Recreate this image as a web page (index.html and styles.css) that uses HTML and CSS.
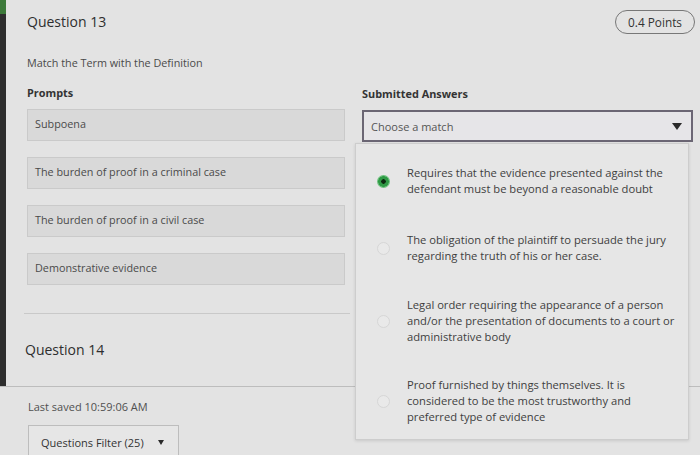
FILE: index.html
```html
<!DOCTYPE html>
<html>
<head>
<meta charset="utf-8">
<link rel="stylesheet" href="styles.css">
</head>
<body>
<div class="page">
  <div class="strip"><div class="strip-top"></div></div>
  <div class="main">
    <div class="q-header">
      <h2 class="q-title">Question 13</h2>
      <span class="points">0.4 Points</span>
    </div>
    <p class="instr">Match the Term with the Definition</p>
    <div class="cols">
      <div class="col-left">
        <div class="col-label">Prompts</div>
        <div class="prompt">Subpoena</div>
        <div class="prompt">The burden of proof in a criminal case</div>
        <div class="prompt">The burden of proof in a civil case</div>
        <div class="prompt">Demonstrative evidence</div>
      </div>
      <div class="col-right">
        <div class="col-label">Submitted Answers</div>
        <div class="select">
          <span>Choose a match</span>
          <span class="caret"></span>
        </div>
        <div class="menu">
          <div class="opt"><span class="radio on"></span><span class="opt-text">Requires that the evidence presented against the defendant must be beyond a reasonable doubt</span></div>
          <div class="opt"><span class="radio"></span><span class="opt-text">The obligation of the plaintiff to persuade the jury regarding the truth of his or her case.</span></div>
          <div class="opt"><span class="radio"></span><span class="opt-text">Legal order requiring the appearance of a person and/or the presentation of documents to a court or administrative body</span></div>
          <div class="opt"><span class="radio"></span><span class="opt-text">Proof furnished by things themselves. It is considered to be the most trustworthy and preferred type of evidence</span></div>
        </div>
      </div>
    </div>
    <div class="q14">
      <h2 class="q-title">Question 14</h2>
    </div>
  </div>
</div>
<div class="footer">
  <div class="saved">Last saved 10:59:06 AM</div>
  <div class="filter"><span>Questions Filter (25)</span><span class="caret small"></span></div>
</div>
</body>
</html>
```
FILE: styles.css
```css
* { box-sizing: border-box; }
html, body { margin: 0; padding: 0; }
body {
  width: 700px;
  height: 455px;
  overflow: hidden;
  background: #e3e3e3;
  font-family: "Open Sans", "Noto Sans", sans-serif;
  color: #3c3c3c;
  position: relative;
}
.page {
  display: flex;
  height: 386px;
}
.strip {
  width: 6px;
  background: #2e2e2e;
  flex: none;
}
.strip-top {
  height: 14px;
  background: #3d7a3a;
}
.main {
  flex: 1;
  padding: 8px 5px 0 21px;
  position: relative;
}
.q-header {
  display: flex;
  justify-content: space-between;
  align-items: center;
  height: 27px;
}
.q-title {
  margin: 0;
  font-size: 14px;
  font-weight: 400;
  color: #2e2e2e;
}
.points {
  border: 1px solid #777;
  border-radius: 13px;
  padding: 3px 12px;
  font-size: 11.8px;
  color: #333;
  margin-right: 0;
}
.instr {
  margin: 20px 0 0 0;
  font-size: 10.8px;
  color: #4a4a4a;
}
.cols {
  display: grid;
  grid-template-columns: 318px 331px;
  column-gap: 17px;
  margin-top: 16px;
}
.col-label {
  font-size: 10.9px;
  font-weight: 700;
  color: #333;
  height: 16px;
  margin-bottom: 8px;
}
.col-left .col-label { margin-top: -1px; margin-bottom: 8px; }
.prompt {
  height: 32px;
  background: #d9d9d9;
  border: 1px solid #cacaca;
  font-size: 10.8px;
  color: #4a4a4a;
  padding: 6px 7px;
  margin-bottom: 16px;
}
.select {
  height: 32px;
  border: 2px solid #6b6674;
  background: #e6e5e8;
  display: flex;
  align-items: center;
  justify-content: space-between;
  padding: 0 9px 0 7px;
  font-size: 11px;
  color: #555;
}
.caret {
  width: 0;
  height: 0;
  border-left: 5px solid transparent;
  border-right: 5px solid transparent;
  border-top: 7px solid #2a2a2a;
}
.caret.small {
  border-left-width: 3px;
  border-right-width: 3px;
  border-top-width: 5px;
}
.menu {
  position: absolute;
  left: 349px;
  top: 143px;
  width: 334px;
  height: 297px;
  background: #e6e6e6;
  border: 1px solid #cdcdcd;
  box-shadow: 0 1px 3px rgba(0,0,0,0.12);
  padding: 21px 8px 0 21px;
  z-index: 2;
}
.opt {
  display: flex;
  align-items: center;
  gap: 17px;
  font-size: 11.2px;
  line-height: 16px;
  color: #3e3e3e;
}
.opt:nth-child(1) { height: 32px; }
.opt:nth-child(2) { height: 32px; margin-top: 35px; }
.opt:nth-child(3) { height: 48px; margin-top: 33px; }
.opt:nth-child(4) { height: 48px; margin-top: 32px; }
.radio {
  flex: none;
  width: 13px;
  height: 13px;
  border-radius: 50%;
  border: 1px solid #d6d6d6;
  background: #e9e9e9;
}
.radio.on {
  background: radial-gradient(circle, #0c2a10 0 2px, #2f9a45 2.5px 5px, #6cc07c 5.5px);
  border: none;
}
.q14 {
  margin-top: 12px;
  border-top: 1px solid #c9c9c9;
  margin-left: -3px;
  margin-right: 345px;
  padding-top: 26px;
  padding-left: 1px;
}
.footer {
  border-top: 1px solid #bdbdbd;
  padding: 12px 0 0 28px;
  height: 69px;
}
.saved {
  font-size: 11px;
  color: #505050;
  height: 26px;
  line-height: 16px;
}
.filter {
  width: 151px;
  height: 34px;
  border: 1px solid #bdbdbd;
  background: #e6e6e6;
  display: flex;
  align-items: center;
  justify-content: space-between;
  padding: 0 14px 0 12px;
  font-size: 11px;
  color: #333;
}
```
